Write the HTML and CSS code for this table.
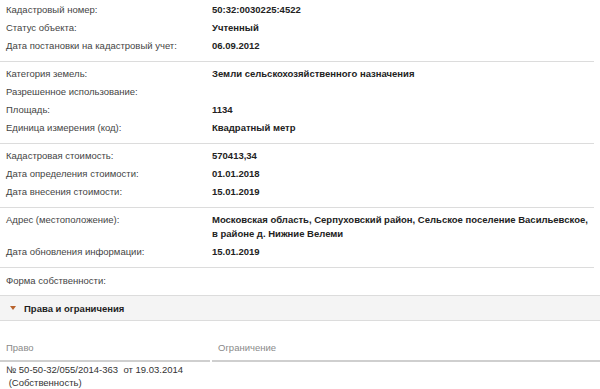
FILE: index.html
```html
<!DOCTYPE html>
<html lang="ru">
<head>
<meta charset="utf-8">
<link rel="stylesheet" href="styles.css">
</head>
<body>
<div class="page">
  <div class="info">
    <div class="group first">
      <div class="row"><div class="label">Кадастровый номер:</div><div class="value">50:32:0030225:4522</div></div>
      <div class="row"><div class="label">Статус объекта:</div><div class="value">Учтенный</div></div>
      <div class="row"><div class="label">Дата постановки на кадастровый учет:</div><div class="value">06.09.2012</div></div>
    </div>
    <div class="group">
      <div class="row"><div class="label">Категория земель:</div><div class="value">Земли сельскохозяйственного назначения</div></div>
      <div class="row"><div class="label">Разрешенное использование:</div><div class="value"></div></div>
      <div class="row"><div class="label">Площадь:</div><div class="value">1134</div></div>
      <div class="row"><div class="label">Единица измерения (код):</div><div class="value">Квадратный метр</div></div>
    </div>
    <div class="group">
      <div class="row"><div class="label">Кадастровая стоимость:</div><div class="value">570413,34</div></div>
      <div class="row"><div class="label">Дата определения стоимости:</div><div class="value">01.01.2018</div></div>
      <div class="row"><div class="label">Дата внесения стоимости:</div><div class="value">15.01.2019</div></div>
    </div>
    <div class="group">
      <div class="row"><div class="label">Адрес (местоположение):</div><div class="value">Московская область, Серпуховский район, Сельское поселение Васильевское, в районе д. Нижние Велеми</div></div>
      <div class="row"><div class="label">Дата обновления информации:</div><div class="value">15.01.2019</div></div>
    </div>
  </div>
  <div class="group wide">
    <div class="row"><div class="label">Форма собственности:</div><div class="value"></div></div>
  </div>
  <div class="section">
    <span class="arrow"></span>
    <span class="section-title">Права и ограничения</span>
  </div>
  <div class="table">
    <div class="thead">
      <div class="th left">Право</div>
      <div class="th right">Ограничение</div>
    </div>
    <div class="trow">
      <div class="td left">№ 50-50-32/055/2014-363&nbsp;&nbsp;от 19.03.2014<br>&nbsp;(Собственность)</div>
      <div class="td right"></div>
    </div>
  </div>
</div>
</body>
</html>
```
FILE: styles.css
```css
html, body {
  margin: 0;
  padding: 0;
  background: #fff;
}
body {
  font-family: "Liberation Sans", Arial, sans-serif;
  font-size: 9.5px;
  color: #333;
}
.page {
  width: 600px;
}
.info {
  width: 594px;
}
.group {
  border-bottom: 1px solid #dcdcdc;
  padding: 3px 0 6px;
}
.group.first {
  padding-top: 1px;
}
.group.wide {
  padding: 4px 0 5px;
}
.row {
  display: flex;
  padding: 2px 0;
  line-height: 14px;
}
.label {
  width: 206px;
  padding-left: 6px;
  flex: none;
  color: #444;
}
.value {
  flex: 1;
  font-weight: bold;
  color: #222;
}
.section {
  display: flex;
  align-items: center;
  height: 24px;
  background: #f4f4f4;
  border-bottom: 1px solid #dcdcdc;
  padding-left: 10px;
  gap: 8px;
}
.arrow {
  width: 0;
  height: 0;
  border-left: 3px solid transparent;
  border-right: 3px solid transparent;
  border-top: 4px solid #b8622c;
}
.section-title {
  font-weight: bold;
  font-size: 9.5px;
  color: #1e1e1e;
}
.table {
  padding-top: 20px;
}
.thead {
  display: flex;
  gap: 2px;
}
.th {
  color: #8a8a8a;
  line-height: 14px;
  padding: 0 6px 5px;
  border-bottom: 2px solid #cfcfcf;
}
.th.left {
  width: 198px;
}
.th.right {
  flex: 1;
}
.trow {
  display: flex;
  border-bottom: 1px solid #dcdcdc;
}
.td {
  line-height: 13px;
  padding: 1px 6px 1px 6px;
  color: #333;
}
.td.left {
  width: 198px;
}
```
